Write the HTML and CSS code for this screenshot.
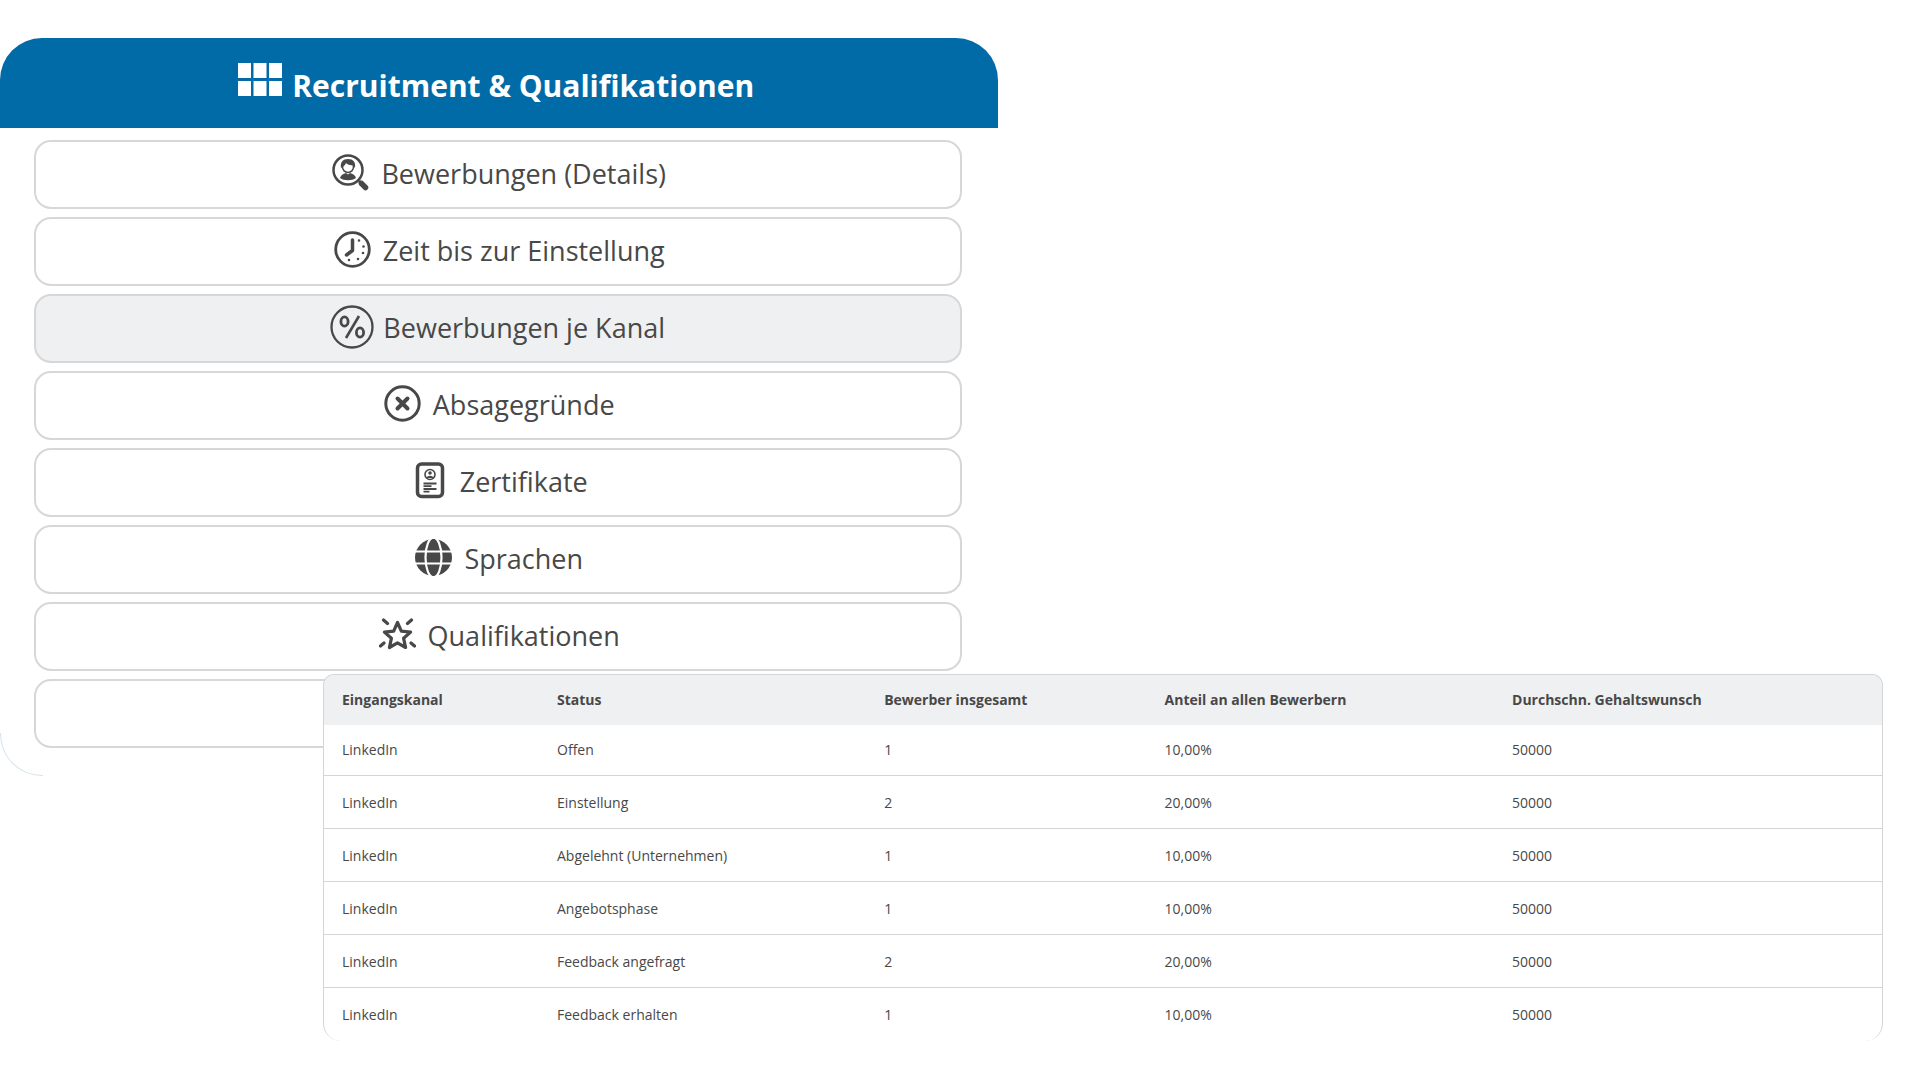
FILE: index.html
```
<!DOCTYPE html>
<html lang="de">

<head>
    <meta charset="utf-8">
    <title>Recruitment &amp; Qualifikationen</title>
    <link rel="stylesheet" href="styles.css">
</head>

<body>
    <div class="panel">
        <h1 class="panel-head">
            <svg class="grid-icon" viewBox="0 0 44 33" fill="#fff">
                <path d="M0 0h13v15H0zM15.500 0h13v15h-13zM31 0h13v15H31zM0 18h13v15H0zM15.500 18h13v15h-13zM31 18h13v15H31z" />
            </svg>
            <span>Recruitment &amp; Qualifikationen</span>
        </h1>
        <nav class="menu">
            <button class="item" type="button">
                <svg class="icon" viewBox="0 0 37 37" fill="none" stroke="currentColor">
                    <circle cx="16" cy="16" r="14.500" stroke-width="2.500" />
                    <path d="M27 27l2 2" stroke-width="3" />
                    <path d="M29.500 29.500l4 4" stroke-width="5.500" stroke-linecap="round" />
                    <circle cx="16" cy="13" r="5.500" stroke-width="1.500" />
                    <path d="M9 14c-1-6 2-9 7-9s8 3 7 9l-2-3c-3 1-6-1-7-2-.5 2-2 3-5 5z" fill="currentColor" stroke="none" />
                    <path d="M8 24c1-3 3-4 6-5l2 1.500 2-1.500c3 1 5 2 6 5-4 3-12 3-16 0z" fill="currentColor" stroke="none" />
                </svg>
                <span>Bewerbungen (Details)</span>
            </button>
            <button class="item" type="button">
                <svg class="icon" viewBox="0 0 37 37" fill="none" stroke="currentColor" stroke-linecap="round">
                    <circle cx="18.500" cy="18.500" r="16.800" stroke-width="2.800" />
                    <path d="M18.500 9v10.500l-6 4.500" stroke-width="3.500" stroke-linejoin="round" />
                    <path d="M25 9.500h.01M29.500 15.500h.01M29 22h.01M24 28h.01M15 29h.01" stroke-width="2.600" />
                </svg>
                <span>Zeit bis zur Einstellung</span>
            </button>
            <button class="item active" type="button">
                <svg class="icon wide" viewBox="0 0 44 44" fill="none" stroke="currentColor">
                    <circle cx="22" cy="22" r="20.500" stroke-width="2.300" />
                    <path d="M29 11L16 33" stroke-width="2.600" />
                    <ellipse cx="14.500" cy="16.500" rx="3.600" ry="4.600" stroke-width="2.800" />
                    <ellipse cx="30" cy="27.500" rx="3.600" ry="4.600" stroke-width="2.800" />
                </svg>
                <span>Bewerbungen je Kanal</span>
            </button>
            <button class="item" type="button">
                <svg class="icon" viewBox="0 0 37 37" fill="none" stroke="currentColor">
                    <circle cx="18.500" cy="18.500" r="16.700" stroke-width="3" />
                    <path d="M13.500 13.500l10 10M23.500 13.500l-10 10" stroke-width="4" stroke-linecap="round" />
                </svg>
                <span>Absagegründe</span>
            </button>
            <button class="item" type="button">
                <svg class="icon" viewBox="0 0 37 37" fill="none" stroke="currentColor">
                    <rect x="6.500" y="2" width="25" height="32.500" rx="4" stroke-width="3.500" />
                    <circle cx="19" cy="12.500" r="5" stroke-width="1.600" />
                    <circle cx="19" cy="11" r="1.800" fill="currentColor" stroke="none" />
                    <path d="M15.500 16c1-3 6-3 7 0z" fill="currentColor" stroke="none" />
                    <path d="M12.500 21.500h13M12.500 24.200h8M12.500 27h13M12.500 29.700h6" stroke-width="1.800" />
                </svg>
                <span>Zertifikate</span>
            </button>
            <button class="item" type="button">
                <svg class="icon" viewBox="0 0 37 37" fill="none" stroke="#fff">
                    <circle cx="18.500" cy="18.500" r="18.500" fill="currentColor" stroke="none" />
                    <ellipse cx="18.500" cy="18.500" rx="8" ry="20" stroke-width="2.200" />
                    <path d="M0 12.500h37M0 24.500h37" stroke-width="2.200" />
                </svg>
                <span>Sprachen</span>
            </button>
            <button class="item" type="button">
                <svg class="icon" viewBox="0 0 37 37" fill="none" stroke="currentColor">
                    <path d="M18.500 6.500l3.800 8.600 9.300 1-7 6.200 2 9.200-8.100-4.700-8.100 4.700 2-9.200-7-6.200 9.300-1z" stroke-width="3.200" stroke-linejoin="round" />
                    <path d="M4.500 4l4 3.500M32.500 4l-4 3.500M1.500 30l3.500-3M35.500 30L32 27" stroke-width="3.200" stroke-linecap="round" />
                </svg>
                <span>Qualifikationen</span>
            </button>
            <button class="item" type="button"></button>
        </nav>
    </div>

    <div class="table-box">
        <table class="channels">
            <thead>
                <tr>
                    <th class="col-channel">Eingangskanal</th>
                    <th class="col-status">Status</th>
                    <th class="col-count">Bewerber insgesamt</th>
                    <th class="col-share">Anteil an allen Bewerbern</th>
                    <th>Durchschn. Gehaltswunsch</th>
                </tr>
            </thead>
            <tbody>
                <tr>
                    <td>LinkedIn</td>
                    <td>Offen</td>
                    <td>1</td>
                    <td>10,00%</td>
                    <td>50000</td>
                </tr>
                <tr>
                    <td>LinkedIn</td>
                    <td>Einstellung</td>
                    <td>2</td>
                    <td>20,00%</td>
                    <td>50000</td>
                </tr>
                <tr>
                    <td>LinkedIn</td>
                    <td>Abgelehnt (Unternehmen)</td>
                    <td>1</td>
                    <td>10,00%</td>
                    <td>50000</td>
                </tr>
                <tr>
                    <td>LinkedIn</td>
                    <td>Angebotsphase</td>
                    <td>1</td>
                    <td>10,00%</td>
                    <td>50000</td>
                </tr>
                <tr>
                    <td>LinkedIn</td>
                    <td>Feedback angefragt</td>
                    <td>2</td>
                    <td>20,00%</td>
                    <td>50000</td>
                </tr>
                <tr>
                    <td>LinkedIn</td>
                    <td>Feedback erhalten</td>
                    <td>1</td>
                    <td>10,00%</td>
                    <td>50000</td>
                </tr>
            </tbody>
        </table>
    </div>
</body>

</html>
```
FILE: styles.css
```
* {
    box-sizing: border-box;
}

body {
    margin: 0;
    padding-top: 38px;
    background-color: white;
    color: #484848;
    font-family: "Open Sans", "Noto Sans", sans-serif;
}

.panel {
    position: relative;
    width: 52%;
    padding-bottom: 28px;
}

/* faint rounded corner at the bottom of the panel */
.panel::after {
    content: "";
    position: absolute;
    left: 0;
    bottom: 0;
    width: 42px;
    height: 42px;
    border: 1px solid #d5e3ec;
    border-top: none;
    border-right: none;
    border-bottom-left-radius: 42px;
}

.panel-head {
    display: flex;
    justify-content: center;
    align-items: center;
    gap: 10px;
    height: 90px;
    margin: 0;
    padding: 5px 6px 0 0;
    border-radius: 42px 42px 0 0;
    background-color: #006ba6;
    color: white;
    font-size: 30px;
    font-weight: 700;
}

.grid-icon {
    width: 44px;
    height: 33px;
    margin-bottom: 12px;
}

.menu {
    display: grid;
    gap: 8px;
    padding: 12px 36px 0 34px;
}

.item {
    display: flex;
    justify-content: center;
    align-items: center;
    gap: 12px;
    height: 69px;
    padding: 0 0 2px 2px;
    border: 2px solid #d6d7d8;
    border-radius: 17px;
    background-color: white;
    color: inherit;
    font-family: inherit;
    font-size: 27px;
    cursor: pointer;
}

.item.active {
    background-color: #eff0f2;
}

.icon {
    width: 37px;
    height: 37px;
    margin-bottom: 2px;
}

.icon.wide {
    width: 44px;
    height: 44px;
    margin-left: -3px;
    margin-right: -3px;
}

/* the table lies over the lower end of the panel */
.table-box {
    position: relative;
    margin: -102px 37px 0 323px;
    border: 1px solid #d4d5d6;
    border-bottom: none;
    border-radius: 11px 11px 18px 18px;
    background-color: white;
    overflow: hidden;
}

.channels {
    width: 100%;
    table-layout: fixed;
    border-collapse: separate;
    border-spacing: 0;
    font-size: 14px;
    text-align: left;
}

.channels th {
    height: 50px;
    padding: 0 18px 2px;
    background-color: #eff0f2;
    font-weight: 700;
}

.channels td {
    height: 53px;
    padding: 0 18px;
    border-bottom: 1px solid #d4d5d6;
}

.channels tr:first-child td {
    height: 51px;
    padding-bottom: 2px;
}

.channels tr:last-child td {
    border-bottom: none;
}

.col-channel {
    width: 13.8%;
}

.col-status {
    width: 21%;
}

.col-count {
    width: 18%;
}

.col-share {
    width: 22.3%;
}
```
